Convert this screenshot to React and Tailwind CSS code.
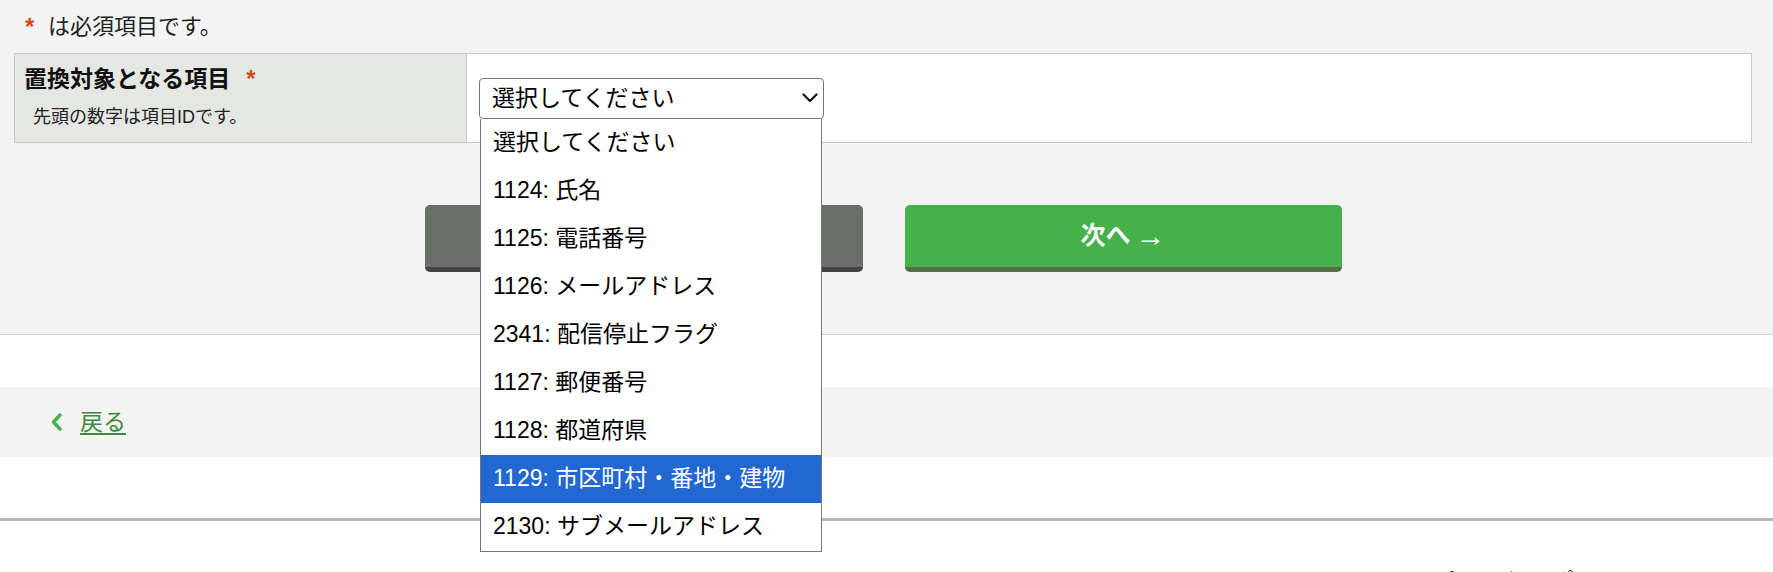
import React from "react";

const options = [
  "選択してください",
  "1124: 氏名",
  "1125: 電話番号",
  "1126: メールアドレス",
  "2341: 配信停止フラグ",
  "1127: 郵便番号",
  "1128: 都道府県",
  "1129: 市区町村・番地・建物",
  "2130: サブメールアドレス",
];

export default function App() {
  return (
    <div className="w-[1773px] h-[572px] overflow-hidden bg-white text-[#222222] font-['Liberation_Sans','Noto_Sans_CJK_JP',sans-serif]">
      <section className="bg-[#f3f3f3] border-b border-[#cccccc] h-[335px]">
        <div className="pl-[14px] pr-[21px]">
          <p className="h-[53px] flex items-center pl-[11px] text-[22px] leading-[30px]">
            <span className="inline-block w-[23px] text-[#d4491c] font-bold text-[24px]">*</span>
            <span>は必須項目です。</span>
          </p>

          <div className="flex border border-[#c8c8c8] h-[90px]">
            <div className="w-[452px] shrink-0 bg-[#e5e7e3] border-r border-[#c8c8c8] pl-[9px] pt-[9px]">
              <div className="font-bold text-[23px] leading-[32px] text-[#111111]">
                置換対象となる項目
                <span className="inline-block ml-[16px] text-[#d4491c] text-[24px]">*</span>
              </div>
              <div className="mt-[9px] pl-[9px] text-[18px] leading-[26px] text-[#222222]">
                先頭の数字は項目IDです。
              </div>
            </div>
            <div className="flex-1 bg-white flex items-center pl-[12px]">
              <div className="relative w-[345px] h-[41px]">
                <div className="h-full border border-[#767676] rounded-[4px] bg-white flex items-center justify-between pl-[12px] pr-[5px] text-[23px] text-black">
                  <span className="leading-[30px]">選択してください</span>
                  <svg width="16" height="10" viewBox="0 0 16 10" fill="none">
                    <path d="M1.5 1.5 L8 8 L14.5 1.5" stroke="#111" strokeWidth="2.2" strokeLinecap="round" strokeLinejoin="round" />
                  </svg>
                </div>
                <ul className="absolute z-10 left-[1px] top-full w-[342px] bg-white border border-t-0 border-[#767676]">
                  {options.map((o, i) => (
                    <li
                      key={o}
                      className={
                        i === 7
                          ? "h-[48px] flex items-center pl-[12px] text-[23px] bg-[#2367d1] text-white"
                          : "h-[48px] flex items-center pl-[12px] text-[23px] text-black"
                      }
                    >
                      {o}
                    </li>
                  ))}
                </ul>
              </div>
            </div>
          </div>

          <div className="flex justify-center gap-[42px] mt-[62px]">
            <button
              aria-label="戻る"
              className="w-[438px] h-[67px] rounded-[5px] bg-[#6a6d68] border-b-[5px] border-[#424242]"
            />
            <button className="w-[437px] h-[67px] rounded-[5px] bg-[#46b04a] border-b-[5px] border-[#546d4a] text-white font-bold text-[25px] flex items-center justify-center gap-[5px]">
              <span>次へ</span>
              <span className="font-normal text-[30px] leading-[30px]">→</span>
            </button>
          </div>
        </div>
      </section>

      <div className="h-[52px]" />

      <div className="h-[70px] bg-[#f3f3f3] flex items-center pl-[50px]">
        <svg width="13" height="18" viewBox="0 0 13 18" fill="none">
          <path d="M10 2 L3.5 9 L10 16" stroke="#46b04a" strokeWidth="3.5" strokeLinecap="round" strokeLinejoin="round" />
        </svg>
        <a className="ml-[17px] text-[23px] leading-[30px] text-[#3b8a3e] underline underline-offset-[3px]">戻る</a>
      </div>

      <div className="h-[61px]" />
      <div className="border-t-[3px] border-[#b8b8b8]" />

      <div className="flex justify-end pr-[139px] pt-[48px] text-[20px] leading-[24px] text-[#333333]">
        <span>プライバシーポリシー</span>
      </div>
    </div>
  );
}
